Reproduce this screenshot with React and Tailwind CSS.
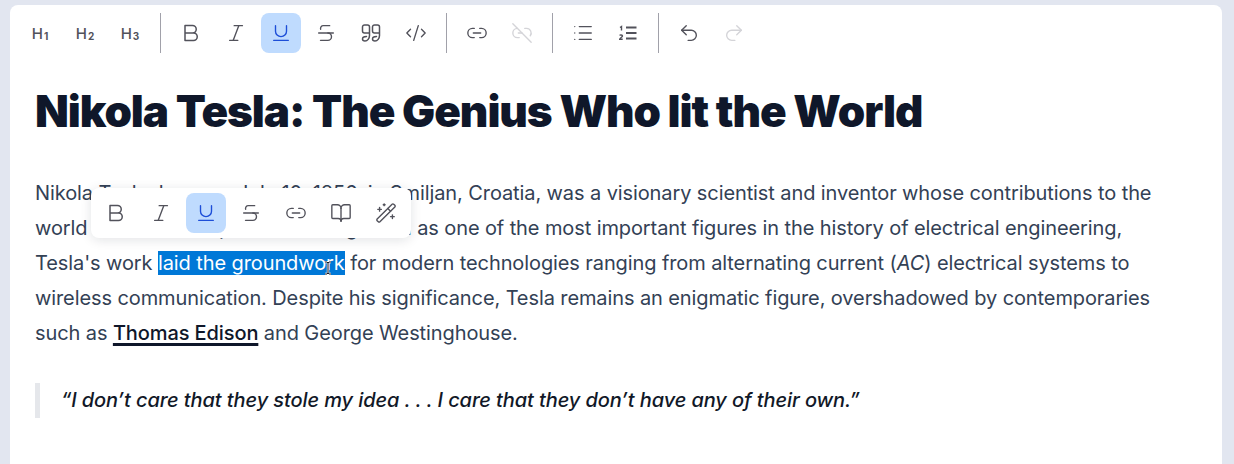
import React from "react";
import { Italic, Underline, Strikethrough, CodeXml, Link2, Link2Off, List, Undo2, Redo2, BookOpen, WandSparkles } from "lucide-react";

const S = { size: 22, strokeWidth: 1.5 };

function HeadingIcon({ n }) {
  return (
    <span className="flex items-end text-[#52525b] leading-none">
      <span className="text-[15px] font-medium">H</span>
      <span className="text-[10px] font-bold ml-[1px]">{n}</span>
    </span>
  );
}

function BoldIcon() {
  return (
    <svg width="22" height="22" viewBox="0 0 22 22" fill="none" stroke="currentColor" strokeWidth="1.5" strokeLinecap="round" strokeLinejoin="round">
      <path d="M5 3.500h7.500a3.700 3.700 0 0 1 0 7.500H5zM5 11h8.500a3.700 3.700 0 0 1 0 7.500H5z" />
    </svg>
  );
}

function QuoteIcon() {
  const one = "M9.500 10.500V5a2 2 0 0 0-2-2h-3a2 2 0 0 0-2 2v4a2 2 0 0 0 2 2h5M9.500 10v3.500c0 3-2 5.500-4.500 5.500-1.500 0-2.500-1-2.500-2 0-1.500 2-2.500 4-2.500";
  return (
    <svg width="22" height="22" viewBox="0 0 22 22" fill="none" stroke="currentColor" strokeWidth="1.5" strokeLinecap="round" strokeLinejoin="round">
      <path d={one} />
      <path d={one} transform="translate(10 0)" />
    </svg>
  );
}

function OrderedIcon() {
  return (
    <svg width="22" height="22" viewBox="0 0 22 22" fill="none" stroke="currentColor" strokeWidth="1.800" strokeLinecap="butt">
      <path d="M9 5.500h10.500M9 11h10.500M9 16.500h10.500" />
      <path d="M3 5.500 4.500 4.500v4M2.700 13.500c.3-.8 2.800-.8 2.800.5 0 1.200-2.800 1.800-2.800 3.200h3" strokeWidth="1.400" />
    </svg>
  );
}

function Btn({ children, active, disabled }) {
  return (
    <button
      className={
        "w-10 h-10 rounded-lg flex items-center justify-center shrink-0 " +
        (active ? "bg-[#bfdbfe] text-[#1d4ed8]" : disabled ? "text-[#d4d4d8]" : "text-[#52525b]")
      }
    >
      {children}
    </button>
  );
}

function Divider() {
  return <div className="w-px h-10 bg-[#a1a1aa] mx-[5px] shrink-0" />;
}

function FloatingMenu() {
  return (
    <div className="absolute left-[81px] top-[183px] flex gap-[5px] p-[5px] bg-white rounded-lg shadow-[0_2px_12px_rgba(15,23,42,0.12)]">
      <Btn><BoldIcon /></Btn>
      <Btn><Italic {...S} /></Btn>
      <Btn active><Underline {...S} /></Btn>
      <Btn><Strikethrough {...S} /></Btn>
      <Btn><Link2 {...S} /></Btn>
      <Btn><BookOpen {...S} /></Btn>
      <Btn><WandSparkles {...S} /></Btn>
    </div>
  );
}

function TextCursor() {
  return (
    <svg className="absolute left-[314px] top-[256px]" width="8" height="14" viewBox="0 0 8 14" fill="none">
      <path d="M1 1h2l1 1 1-1h2M4 2v10M1 13h2l1-1 1 1h2" stroke="#ffffff" strokeWidth="2.400" />
      <path d="M1 1h2l1 1 1-1h2M4 2v10M1 13h2l1-1 1 1h2" stroke="#111827" strokeWidth="1" />
    </svg>
  );
}

export default function App() {
  return (
    <div className="w-[1234px] h-[464px] overflow-hidden bg-[#e2e6f0] pt-[5px] pl-[10px] pr-[12px]" style={{ fontFamily: "Inter, sans-serif" }}>
      <div className="relative h-[459px] bg-white rounded-t-lg overflow-hidden">
        <div className="flex items-center gap-[5px] pl-[10px] pt-[8px]">
          <Btn><HeadingIcon n="1" /></Btn>
          <Btn><HeadingIcon n="2" /></Btn>
          <Btn><HeadingIcon n="3" /></Btn>
          <Divider />
          <Btn><BoldIcon /></Btn>
          <Btn><Italic {...S} /></Btn>
          <Btn active><Underline {...S} /></Btn>
          <Btn><Strikethrough {...S} /></Btn>
          <Btn><QuoteIcon /></Btn>
          <Btn><CodeXml {...S} /></Btn>
          <Divider />
          <Btn><Link2 {...S} /></Btn>
          <Btn disabled><Link2Off {...S} /></Btn>
          <Divider />
          <Btn><List {...S} /></Btn>
          <Btn><OrderedIcon /></Btn>
          <Divider />
          <Btn><Undo2 {...S} /></Btn>
          <Btn disabled><Redo2 {...S} /></Btn>
        </div>

        <div className="px-[25px]">
          <h1 className="mt-[29px] text-[44px] leading-[58px] font-black tracking-[-0.024em] text-[#0f172a]">
            Nikola Tesla: The Genius Who lit the World
          </h1>
          <p className="mt-[36px] text-[20px] leading-[35px] tracking-[-0.1px] text-[#334155] w-[1165px]">
            Nikola Tesla, born on July 10, 1856, in Smiljan, Croatia, was a visionary scientist and inventor whose contributions to the
            <br />
            world are wide and pervasive. Regarded as one of the most important figures in the history of electrical engineering,
            <br />
            Tesla's work <span className="bg-[#0078d7] text-white">laid the groundwork</span> for modern technologies ranging from alternating current (<em>AC</em>) electrical systems to
            <br />
            wireless communication. Despite his significance, Tesla remains an enigmatic figure, overshadowed by contemporaries
            <br />
            such as <span className="font-medium text-[#0f172a] underline decoration-[2.5px] underline-offset-[3px]">Thomas Edison</span> and George Westinghouse.
          </p>
          <blockquote className="mt-[32px] border-l-[5px] border-[#e5e7eb] pl-[21px] text-[20px] leading-[35px] tracking-[-0.09px] italic font-medium text-[#111827]">
            “I don’t care that they stole my idea . . . I care that they don’t have any of their own.”
          </blockquote>
        </div>

        <TextCursor />
        <FloatingMenu />
      </div>
    </div>
  );
}
